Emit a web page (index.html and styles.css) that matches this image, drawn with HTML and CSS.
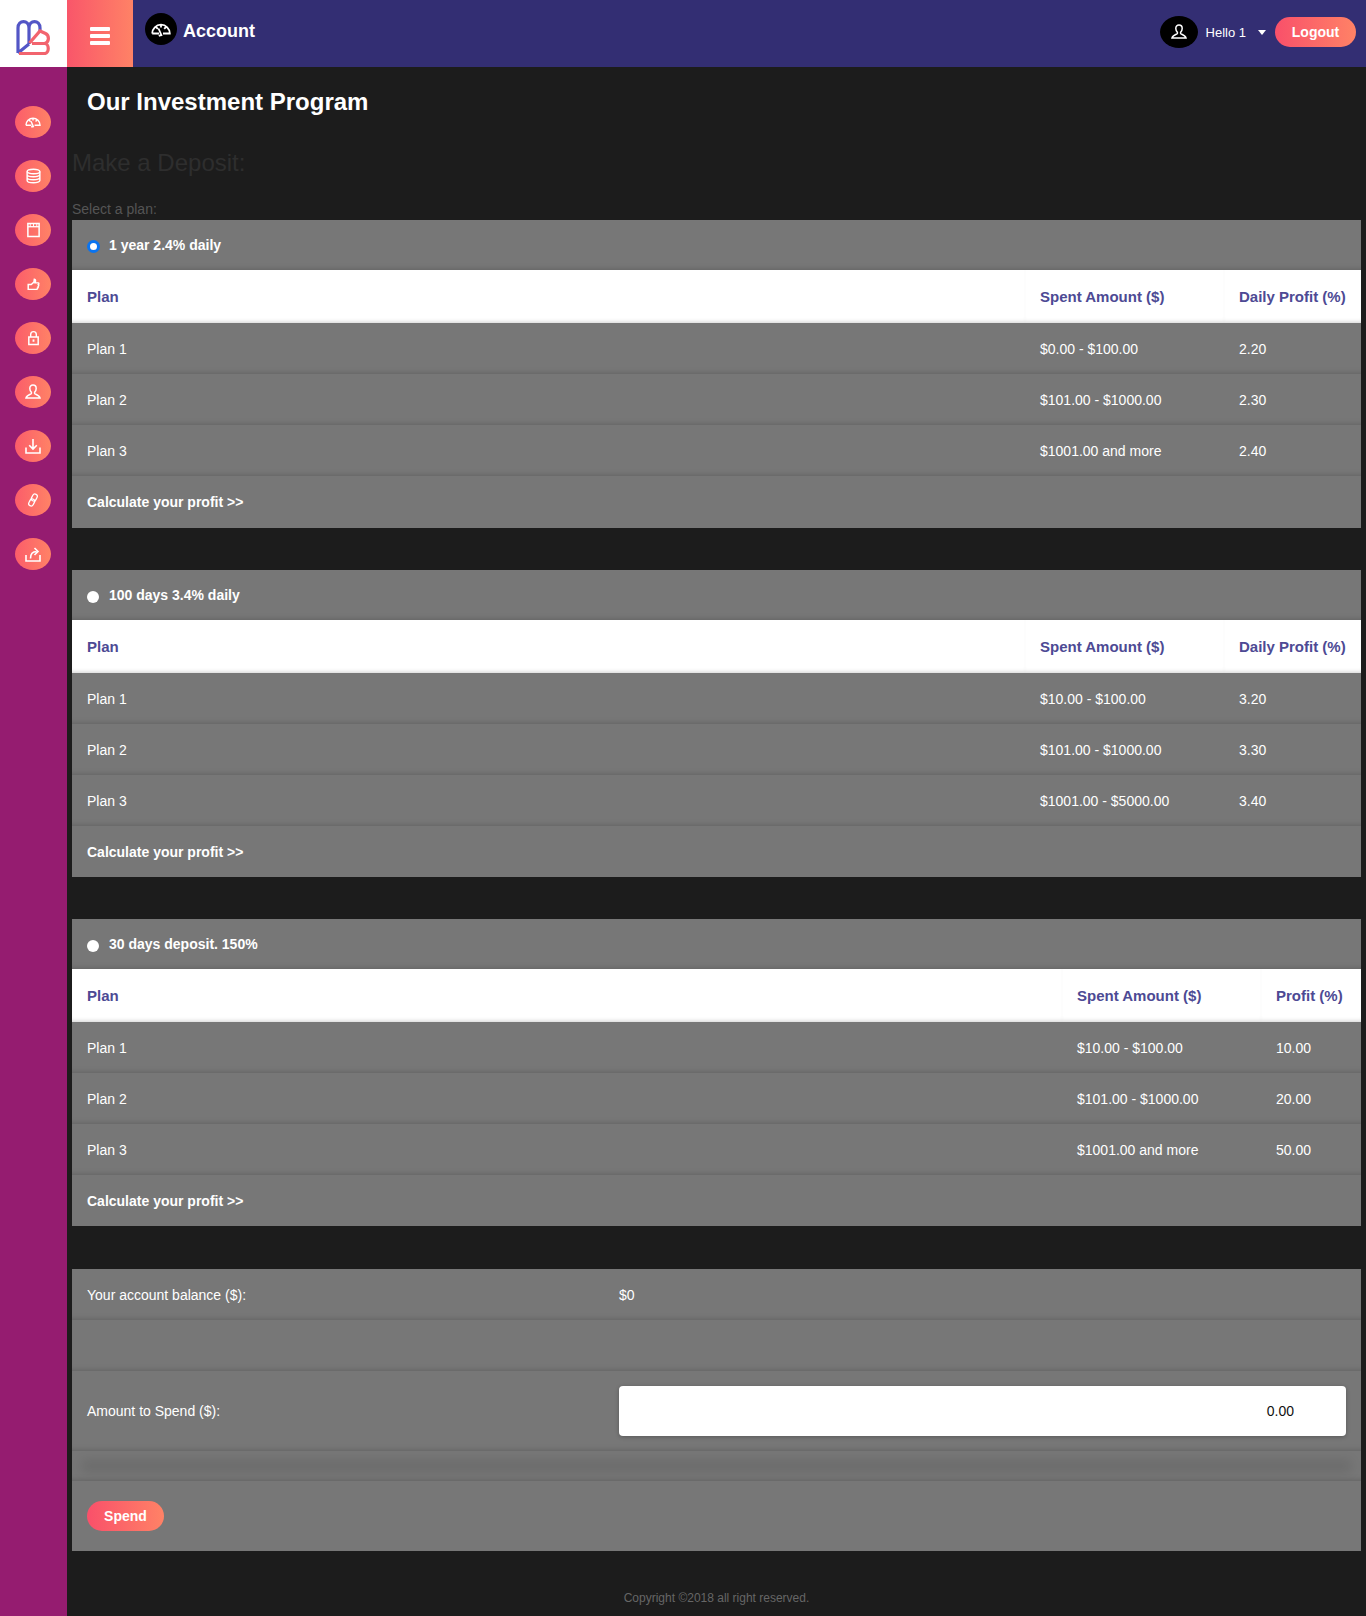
FILE: index.html
```html
<!DOCTYPE html>
<html lang="en">
<head>
<meta charset="utf-8">
<title>Our Investment Program</title>
<link rel="stylesheet" href="styles.css">
</head>
<body>
<svg class="defs" width="0" height="0" aria-hidden="true">
  <symbol id="i-gauge" viewBox="0 0 20 15"><path d="M1.200 11.500a8.800 8.800 0 0 1 17.600 0H12M8 11.500H1.200M10 3v2.500M5 5l1.800 1.800M15 5l-1.800 1.800M7.500 6.500l3.300 7.500M7.800 13.800l3-1.200" fill="none" stroke="currentColor" stroke-width="1.800"/></symbol>
  <symbol id="i-db" viewBox="0 0 16 16"><ellipse cx="8" cy="3.200" rx="6.800" ry="2.400" fill="none" stroke="currentColor" stroke-width="1.500"/><path d="M1.200 3.200v9.600c0 1.300 3 2.400 6.800 2.400s6.800-1.100 6.800-2.400V3.200M1.200 6.400c0 1.300 3 2.400 6.800 2.400s6.800-1.100 6.800-2.400M1.200 9.600c0 1.300 3 2.400 6.800 2.400s6.800-1.100 6.800-2.400" fill="none" stroke="currentColor" stroke-width="1.500"/></symbol>
  <symbol id="i-cal" viewBox="0 0 16 16"><path d="M2 1h12v14H2z" fill="none" stroke="currentColor" stroke-width="1.600"/><path d="M2 4.500h12" stroke="currentColor" stroke-width="1.400"/><path d="M4.500 1v3.500M8 1v3.500M11.500 1v3.500" stroke="currentColor" stroke-width="1"/></symbol>
  <symbol id="i-thumb" viewBox="0 0 16 16"><path d="M1.500 8h3.700l3.300-3 .5-3.500c1.600.2 2 1.800 1 4.500h3.800c1 0 1 1.800.2 2.200.7.600.5 1.800-.3 2.100.3.900 0 1.800-.8 2 .1 1-.5 1.700-1.400 1.700H1.500z" fill="none" stroke="currentColor" stroke-width="1.800"/></symbol>
  <symbol id="i-lock" viewBox="0 0 16 16"><path d="M3 7h10v8H3z" fill="none" stroke="currentColor" stroke-width="1.600"/><path d="M5 7V4.200a3 3 0 0 1 6 0V7" fill="none" stroke="currentColor" stroke-width="1.500"/><path d="M7 9.500h2v2.500H7z" fill="currentColor"/></symbol>
  <symbol id="i-user" viewBox="0 0 16 16"><path d="M8 1c2 0 3.200 1.500 3.200 3.400 0 1.700-.8 3-1.600 3.800v1.300c0 .7 4.600 1.200 5.400 4.500H1c.8-3.300 5.400-3.800 5.400-4.500V8.200C5.600 7.400 4.800 6.100 4.800 4.400 4.800 2.500 6 1 8 1z" fill="none" stroke="currentColor" stroke-width="1.500"/></symbol>
  <symbol id="i-down" viewBox="0 0 16 16"><path d="M1 9.500v5.500h14V9.500M8 1v10M4.200 7.200L8 11l3.800-3.800" fill="none" stroke="currentColor" stroke-width="1.600"/></symbol>
  <symbol id="i-link" viewBox="0 0 16 16"><rect x="6.800" y="1" width="5.400" height="8.400" rx="2.700" transform="rotate(28 9.500 5.200)" fill="none" stroke="currentColor" stroke-width="1.500"/><rect x="3.800" y="6.600" width="5.400" height="8.400" rx="2.700" transform="rotate(28 6.500 10.800)" fill="none" stroke="currentColor" stroke-width="1.500"/></symbol>
  <symbol id="i-share" viewBox="0 0 16 16"><path d="M1 9v6h14V9M5.500 12.500c0-4.500 2.500-7 6-7M9.500 2l3.500 3.500L9.500 9" fill="none" stroke="currentColor" stroke-width="1.600"/></symbol>
</svg>

<header class="topbar">
  <div class="logo">
    <svg width="34" height="36" viewBox="16 22 34 36">
      <path d="M18 56V31C18 22.500 29 22.500 29 31V47M29 31C29 22.500 40 22.500 40 31V35M18 56L29 47" fill="none" stroke="#5356c6" stroke-width="3.200"/>
      <path d="M19 56.500H44.500C49.500 56.500 49.500 46.500 44.500 46.500H32M44.500 46.500C49.500 45.500 49.500 38.500 45.500 36.500L40 34L29.500 46" fill="none" stroke="#f2646e" stroke-width="3.200"/>
    </svg>
  </div>
  <button class="burger" type="button" aria-label="Menu"><span></span><span></span><span></span></button>
  <div class="crumb">
    <span class="round"><svg width="20" height="15"><use href="#i-gauge"/></svg></span>
    <span class="crumb-text">Account</span>
  </div>
  <div class="user">
    <span class="round round-user"><svg width="16" height="16"><use href="#i-user"/></svg></span>
    <span class="hello">Hello 1</span>
    <span class="caret"></span>
    <a class="pill pill-logout" href="#">Logout</a>
  </div>
</header>

<div class="shell">
  <nav class="side">
    <a class="dot" href="#"><svg width="16" height="12"><use href="#i-gauge"/></svg></a>
    <a class="dot" href="#"><svg width="15" height="16"><use href="#i-db"/></svg></a>
    <a class="dot" href="#"><svg width="15" height="16"><use href="#i-cal"/></svg></a>
    <a class="dot" href="#"><svg width="13" height="13"><use href="#i-thumb"/></svg></a>
    <a class="dot" href="#"><svg width="15" height="16"><use href="#i-lock"/></svg></a>
    <a class="dot" href="#"><svg width="16" height="16"><use href="#i-user"/></svg></a>
    <a class="dot" href="#"><svg width="16" height="16"><use href="#i-down"/></svg></a>
    <a class="dot" href="#"><svg width="14" height="14"><use href="#i-link"/></svg></a>
    <a class="dot" href="#"><svg width="16" height="16"><use href="#i-share"/></svg></a>
  </nav>

  <main class="main">
    <h1 class="title">Our Investment Program</h1>
    <h2 class="subtitle">Make a Deposit:</h2>
    <p class="select-label">Select a plan:</p>

    <table class="plan">
      <colgroup><col><col class="c-amt"><col class="c-pct"></colgroup>
      <tr class="head-row"><td colspan="3"><span class="radio radio-on"></span><b>1 year 2.4% daily</b></td></tr>
      <tr class="th-row"><th>Plan</th><th>Spent Amount ($)</th><th>Daily Profit (%)</th></tr>
      <tr><td>Plan 1</td><td>$0.00 - $100.00</td><td>2.20</td></tr>
      <tr><td>Plan 2</td><td>$101.00 - $1000.00</td><td>2.30</td></tr>
      <tr><td>Plan 3</td><td>$1001.00 and more</td><td>2.40</td></tr>
      <tr class="calc-row calc-row-tall"><td colspan="3"><a href="#">Calculate your profit &gt;&gt;</a></td></tr>
    </table>

    <table class="plan">
      <colgroup><col><col class="c-amt"><col class="c-pct"></colgroup>
      <tr class="head-row"><td colspan="3"><span class="radio"></span><b>100 days 3.4% daily</b></td></tr>
      <tr class="th-row"><th>Plan</th><th>Spent Amount ($)</th><th>Daily Profit (%)</th></tr>
      <tr><td>Plan 1</td><td>$10.00 - $100.00</td><td>3.20</td></tr>
      <tr><td>Plan 2</td><td>$101.00 - $1000.00</td><td>3.30</td></tr>
      <tr><td>Plan 3</td><td>$1001.00 - $5000.00</td><td>3.40</td></tr>
      <tr class="calc-row"><td colspan="3"><a href="#">Calculate your profit &gt;&gt;</a></td></tr>
    </table>

    <table class="plan plan-last">
      <colgroup><col><col class="c-amt"><col class="c-pct-short"></colgroup>
      <tr class="head-row"><td colspan="3"><span class="radio"></span><b>30 days deposit. 150%</b></td></tr>
      <tr class="th-row"><th>Plan</th><th>Spent Amount ($)</th><th>Profit (%)</th></tr>
      <tr><td>Plan 1</td><td>$10.00 - $100.00</td><td>10.00</td></tr>
      <tr><td>Plan 2</td><td>$101.00 - $1000.00</td><td>20.00</td></tr>
      <tr><td>Plan 3</td><td>$1001.00 and more</td><td>50.00</td></tr>
      <tr class="calc-row"><td colspan="3"><a href="#">Calculate your profit &gt;&gt;</a></td></tr>
    </table>

    <table class="spend">
      <colgroup><col class="c-label"><col></colgroup>
      <tr class="row-51"><td>Your account balance ($):</td><td>$0</td></tr>
      <tr class="row-51"><td colspan="2"></td></tr>
      <tr class="row-amount"><td>Amount to Spend ($):</td><td><input class="amount" type="text" value="0.00"></td></tr>
      <tr class="row-blank"><td colspan="2"><div class="ghost"></div></td></tr>
      <tr class="row-btn"><td colspan="2"><a class="pill pill-spend" href="#">Spend</a></td></tr>
    </table>

    <footer class="copy">Copyright ©2018 all right reserved.</footer>
  </main>
</div>
</body>
</html>
```
FILE: styles.css
```css
* { box-sizing: border-box; }
html, body { margin: 0; padding: 0; }
body {
  background: #1c1c1c;
  font-family: "Liberation Sans", Arial, sans-serif;
  font-size: 14px;
  color: #fff;
}
a { color: inherit; text-decoration: none; }
.defs { position: absolute; }

.topbar {
  display: flex;
  align-items: stretch;
  height: 67px;
  background: #332e73;
}
.logo {
  width: 67px;
  background: #fff;
  display: flex;
  align-items: center;
  justify-content: center;
  padding: 7px 2px 0 0;
}
.burger {
  width: 66px;
  border: 0;
  padding: 4px 0 0;
  background: linear-gradient(to right, #f9566a, #ff8266);
  display: flex;
  flex-direction: column;
  align-items: center;
  justify-content: center;
  gap: 3px;
}
.burger span { width: 20px; height: 4px; background: #fff; border-radius: 1px; }

.crumb { display: flex; align-items: flex-start; padding: 13px 0 0 12px; gap: 6px; }
.round {
  display: flex;
  align-items: center;
  justify-content: center;
  width: 32px;
  height: 32px;
  border-radius: 50%;
  background: #000;
  color: #fff;
}
.crumb-text { font-size: 18px; font-weight: 700; line-height: 36px; height: 36px; }

.user { margin-left: auto; display: flex; align-items: center; padding: 0 10px 3px 0; }
.round-user { width: 38px; height: 32px; }
.hello { margin-left: 8px; font-size: 13px; }
.caret {
  margin: 0 0 0 12px;
  border-style: solid;
  border-width: 5px 4px 0;
  border-color: #fff transparent transparent;
}
.pill {
  display: flex;
  align-items: center;
  justify-content: center;
  height: 30px;
  border-radius: 15px;
  font-weight: 700;
  background: linear-gradient(to right, #f9506a, #ff8266);
}
.pill-logout { width: 81px; margin-left: 9px; }
.pill-spend { width: 77px; }

.shell { display: flex; min-height: 1549px; }
.side {
  width: 67px;
  flex: none;
  background: #951c70;
  padding: 39px 1px 0 0;
  display: flex;
  flex-direction: column;
  align-items: center;
  gap: 22px;
}
.dot {
  width: 36px;
  height: 32px;
  border-radius: 50%;
  background: linear-gradient(to right, #fb5d6a, #ff8266);
  color: #fff;
  display: flex;
  align-items: center;
  justify-content: center;
}

.main { flex: 1; min-width: 0; padding: 0 5px; }
.title { margin: 0; padding: 21px 0 0 15px; font-size: 24px; line-height: 28px; font-weight: 700; }
.subtitle { margin: 0; padding-top: 33px; font-size: 24px; line-height: 28px; font-weight: 400; color: #2e2e2e; }
.select-label { margin: 0; padding-top: 24px; line-height: 16px; height: 43px; color: #555; }

.plan, .spend {
  width: 100%;
  table-layout: fixed;
  border-collapse: collapse;
  background: #777;
  margin-bottom: 42px;
}
.plan-last { margin-bottom: 43px; }
.plan td, .plan th, .spend td { padding: 0 15px; text-align: left; }
.plan td, .plan th { height: 51px; }
.plan .head-row td { height: 50px; }
.plan .calc-row-tall td { height: 52px; }
.c-amt { width: 199px; }
.c-pct { width: 137px; }
.c-pct-short { width: 100px; }
.plan tr, .spend tr { box-shadow: inset 0 -6px 6px -6px rgba(0, 0, 0, .22); }

.head-row b { font-weight: 700; }
.plan .th-row th {
  height: 53px;
  background: #fff;
  color: #4d4a94;
  font-size: 15px;
  font-weight: 700;
  box-shadow: inset 0 -4px 4px -3px rgba(0, 0, 0, .18);
}
.calc-row { box-shadow: none !important; }
.calc-row a { font-weight: 700; }

.radio {
  display: inline-block;
  width: 12px;
  height: 12px;
  margin-right: 10px;
  vertical-align: -3px;
  border-radius: 50%;
  background: #fff;
}
.radio-on { width: 13px; height: 13px; margin-right: 9px; border: 3px solid #0a74f0; }

.spend { margin-bottom: 0; }
.c-label { width: 532px; }
.row-51 td { height: 51px; }
.row-amount td { height: 80px; }
.row-blank td { height: 30px; }
.row-btn td { height: 70px; }
.row-btn { box-shadow: none !important; }
.amount {
  display: block;
  width: 100%;
  height: 50px;
  border: 0;
  border-radius: 4px;
  padding: 0 52px 0 0;
  text-align: right;
  font: 14px "Liberation Sans", Arial, sans-serif;
  color: #111;
  background: #fff;
  box-shadow: 0 1px 4px rgba(0, 0, 0, .25);
}
.ghost { height: 0; box-shadow: 0 0 12px 5px rgba(0, 0, 0, .12); }
.copy { padding-top: 39px; text-align: center; font-size: 12px; line-height: 16px; color: #666; }
```
